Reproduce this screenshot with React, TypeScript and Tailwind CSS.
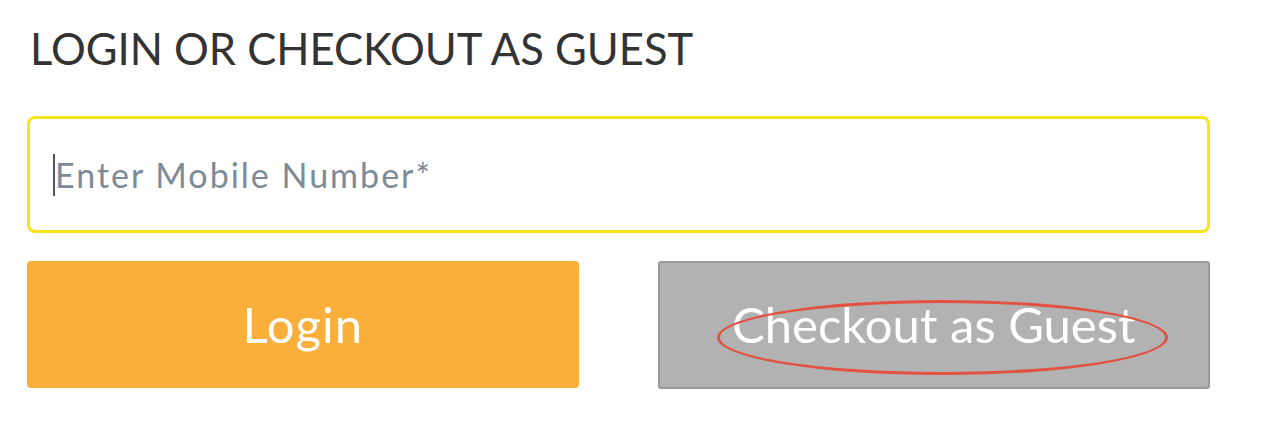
import React from 'react';

// Login / guest checkout block
const App = () => {
  return (
    <div className="w-[1273px] h-[439px] bg-white pl-[27px] pt-[24px] font-['Lato',sans-serif]">
      <h2 className="text-[43.5px] leading-[48px] text-[#333] ml-[3px] font-normal">
        LOGIN OR CHECKOUT AS GUEST
      </h2>

      <div className="mt-[44px] w-[1183px] h-[117px] rounded-[8px] border-[3px] border-[#f7e41a] flex items-center pl-[23px]">
        <span className="w-[2px] h-[42px] bg-[#555]" />
        <span className="text-[34px] tracking-[2px] text-[#7d8b99]">Enter Mobile Number*</span>
      </div>

      <div className="mt-[28px] w-[1183px] flex gap-[79px]">
        <button className="w-[552px] h-[127px] rounded-[4px] bg-[#faaf3b] text-white text-[49px] tracking-[1px] flex items-center justify-center">
          Login
        </button>
        <button className="relative w-[553px] h-[128px] rounded-[3px] bg-[#b2b2b2] border-2 border-[#9a9a9a] text-white text-[49px] flex items-center justify-center">
          Checkout as Guest
          <span className="absolute left-[57px] top-[37px] w-[451px] h-[75px] rounded-[50%] border-[3px] border-[#e2513f]" />
        </button>
      </div>
    </div>
  );
};

export default App;
